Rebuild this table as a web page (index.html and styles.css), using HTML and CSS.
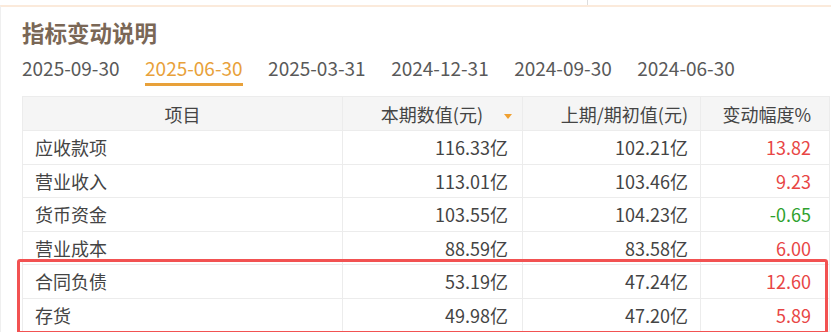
FILE: index.html
```html
<!DOCTYPE html>
<html lang="zh-CN">
<head>
    <meta charset="UTF-8">
    <meta name="viewport" content="width=device-width, initial-scale=1.0">
    <title>指标变动说明</title>
    <link rel="stylesheet" href="styles.css">
</head>
<body>
    <div class="top-strip"><span class="tick"></span></div>

    <div class="panel">
        <h2 class="title">指标变动说明</h2>

        <div class="tabs">
            <span class="tab">2025-09-30</span>
            <span class="tab active">2025-06-30</span>
            <span class="tab">2025-03-31</span>
            <span class="tab">2024-12-31</span>
            <span class="tab">2024-09-30</span>
            <span class="tab">2024-06-30</span>
        </div>

        <div class="table-wrap">
            <table class="change-table">
                <colgroup>
                    <col class="c-name">
                    <col class="c-cur">
                    <col class="c-prev">
                    <col class="c-rate">
                </colgroup>
                <thead>
                    <tr>
                        <th class="center">项目</th>
                        <th class="sorted">本期数值(元)<span class="sort-arrow"></span></th>
                        <th class="p-prev">上期/期初值(元)</th>
                        <th class="p-rate">变动幅度%</th>
                    </tr>
                </thead>
                <tbody>
                    <tr>
                        <td>应收款项</td>
                        <td class="num">116.33亿</td>
                        <td class="num p-prev">102.21亿</td>
                        <td class="num p-rate up">13.82</td>
                    </tr>
                    <tr>
                        <td>营业收入</td>
                        <td class="num">113.01亿</td>
                        <td class="num p-prev">103.46亿</td>
                        <td class="num p-rate up">9.23</td>
                    </tr>
                    <tr>
                        <td>货币资金</td>
                        <td class="num">103.55亿</td>
                        <td class="num p-prev">104.23亿</td>
                        <td class="num p-rate down">-0.65</td>
                    </tr>
                    <tr>
                        <td>营业成本</td>
                        <td class="num">88.59亿</td>
                        <td class="num p-prev">83.58亿</td>
                        <td class="num p-rate up">6.00</td>
                    </tr>
                    <tr>
                        <td>合同负债</td>
                        <td class="num">53.19亿</td>
                        <td class="num p-prev">47.24亿</td>
                        <td class="num p-rate up">12.60</td>
                    </tr>
                    <tr>
                        <td>存货</td>
                        <td class="num">49.98亿</td>
                        <td class="num p-prev">47.20亿</td>
                        <td class="num p-rate up">5.89</td>
                    </tr>
                </tbody>
            </table>

            <!-- highlight box round the last two rows -->
            <div class="highlight"></div>
        </div>
    </div>
</body>
</html>
```

FILE: styles.css
```css
body {
    margin: 0;
    background: #fff;
    font-family: "Noto Sans CJK SC", "Noto Sans", sans-serif;
    color: #444;
    overflow: hidden;
}
.top-strip {
    height: 5px;
    display: flex;
}
.tick {
    width: 1px;
    height: 5px;
    margin-left: 587px;
    background: #ddd;
}
.panel {
    border-top: 2px solid #fbeadb;
    border-left: 1px solid #efefef;
    padding: 10px 0 0 21px;
}
.title {
    margin: 0;
    font-size: 22.5px;
    line-height: 30px;
    font-weight: bold;
    color: #7a6756;
}
.tabs {
    display: flex;
    gap: 25.5px;
    margin-top: 9px;
}
.tab {
    font-size: 19px;
    line-height: 24px;
    color: #595959;
    padding-bottom: 3px;
    border-bottom: 3px solid transparent;
}
.tab.active {
    color: #e8a13a;
    border-bottom-color: #e8a13a;
}
.table-wrap {
    position: relative;
    margin-top: 10px;
    width: 807px;
}
.change-table {
    width: 807px;
    border-collapse: collapse;
    table-layout: fixed;
    font-size: 18px;
}
.c-name { width: 320px; }
.c-cur { width: 180px; }
.c-prev { width: 178px; }
.c-rate { width: 129px; }
.change-table th,
.change-table td {
    border: 1px solid #ececec;
    height: 33.5px;
    padding: 0 14px 0 12px;
    box-sizing: border-box;
    text-align: left;
    white-space: nowrap;
}
.change-table thead th {
    height: 34px;
    background: #f5f5f5;
    font-weight: normal;
    color: #444;
    text-align: right;
}
.change-table th.center {
    text-align: center;
    padding: 0;
}
.sorted {
    padding-right: 10px !important;
}
.sort-arrow {
    display: inline-block;
    width: 0;
    height: 0;
    margin-left: 21px;
    vertical-align: middle;
    border-left: 4px solid transparent;
    border-right: 4px solid transparent;
    border-top: 5px solid #f0a030;
}
.change-table td.num {
    text-align: right;
}
.change-table .p-prev { padding-right: 12px; }
.change-table .p-rate { padding-right: 18px; }
.up { color: #e84545; }
.down { color: #2ea12e; }
.highlight {
    position: absolute;
    left: -5px;
    top: 163px;
    width: 811px;
    height: 75px;
    box-sizing: border-box;
    border: 3px solid #f25252;
    border-radius: 3px;
}
```
